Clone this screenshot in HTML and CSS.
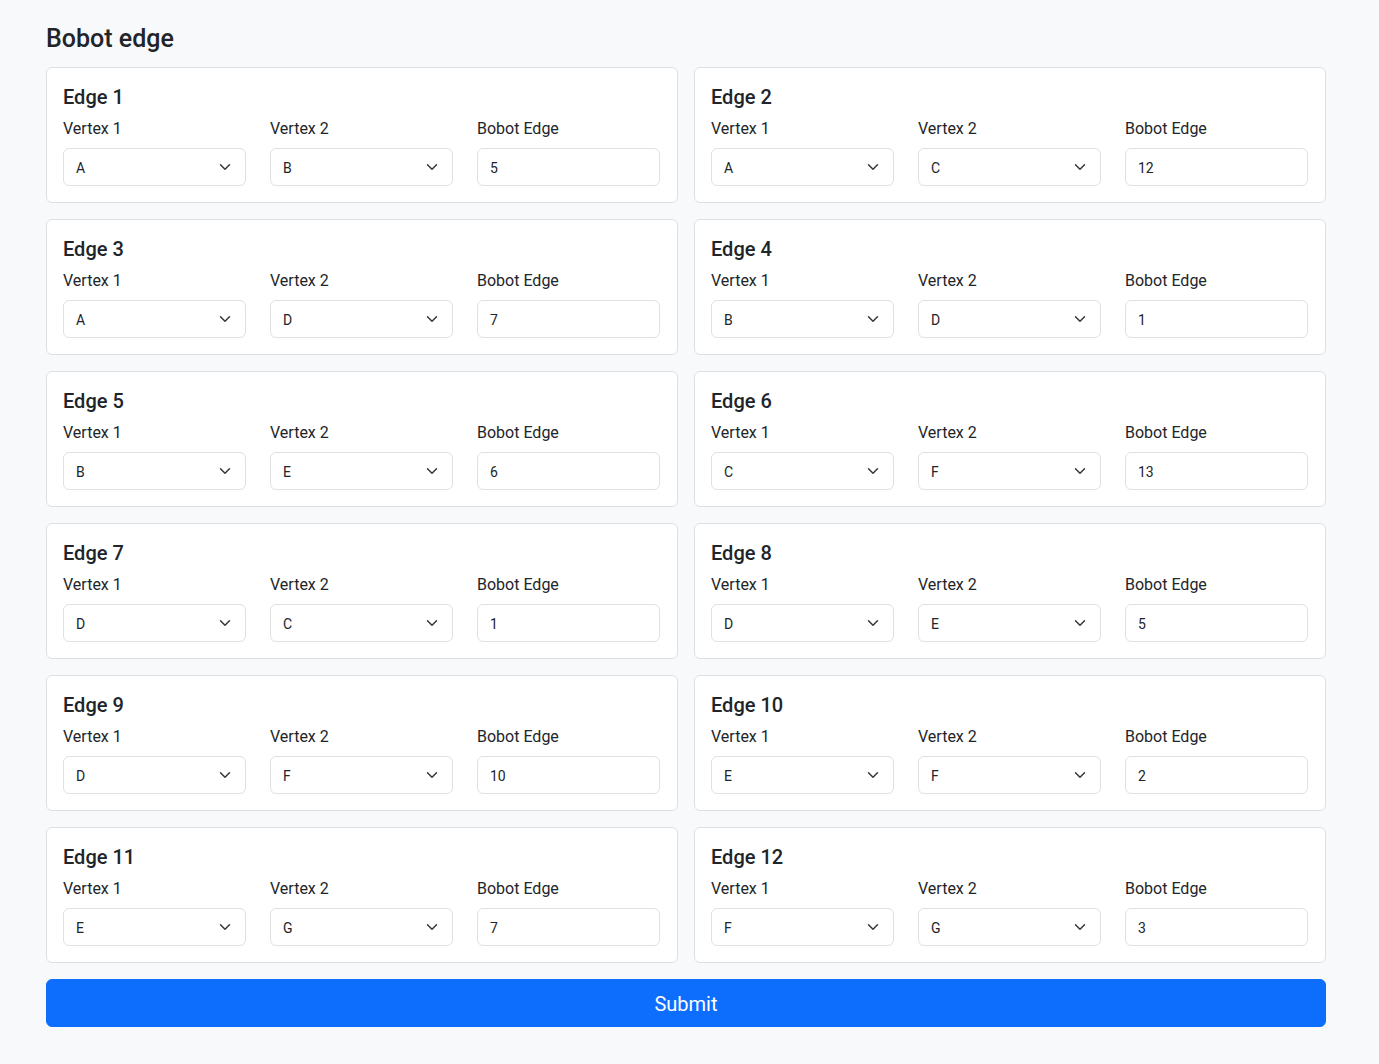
FILE: index.html
```html
<!DOCTYPE html>
<html lang="en">
<head>
<meta charset="utf-8">
<title>Bobot edge</title>
<link rel="stylesheet" href="styles.css">
</head>
<body>
<main class="page">
  <h4 class="title">Bobot edge</h4>
  <form class="edges">
    <div class="card"><h5 class="card-title">Edge 1</h5><div class="fields">
      <div class="field"><label class="label">Vertex 1</label><select class="select"><option>A</option></select></div>
      <div class="field"><label class="label">Vertex 2</label><select class="select"><option>B</option></select></div>
      <div class="field"><label class="label">Bobot Edge</label><input class="input" value="5"></div></div></div>
    <div class="card"><h5 class="card-title">Edge 2</h5><div class="fields">
      <div class="field"><label class="label">Vertex 1</label><select class="select"><option>A</option></select></div>
      <div class="field"><label class="label">Vertex 2</label><select class="select"><option>C</option></select></div>
      <div class="field"><label class="label">Bobot Edge</label><input class="input" value="12"></div></div></div>
    <div class="card"><h5 class="card-title">Edge 3</h5><div class="fields">
      <div class="field"><label class="label">Vertex 1</label><select class="select"><option>A</option></select></div>
      <div class="field"><label class="label">Vertex 2</label><select class="select"><option>D</option></select></div>
      <div class="field"><label class="label">Bobot Edge</label><input class="input" value="7"></div></div></div>
    <div class="card"><h5 class="card-title">Edge 4</h5><div class="fields">
      <div class="field"><label class="label">Vertex 1</label><select class="select"><option>B</option></select></div>
      <div class="field"><label class="label">Vertex 2</label><select class="select"><option>D</option></select></div>
      <div class="field"><label class="label">Bobot Edge</label><input class="input" value="1"></div></div></div>
    <div class="card"><h5 class="card-title">Edge 5</h5><div class="fields">
      <div class="field"><label class="label">Vertex 1</label><select class="select"><option>B</option></select></div>
      <div class="field"><label class="label">Vertex 2</label><select class="select"><option>E</option></select></div>
      <div class="field"><label class="label">Bobot Edge</label><input class="input" value="6"></div></div></div>
    <div class="card"><h5 class="card-title">Edge 6</h5><div class="fields">
      <div class="field"><label class="label">Vertex 1</label><select class="select"><option>C</option></select></div>
      <div class="field"><label class="label">Vertex 2</label><select class="select"><option>F</option></select></div>
      <div class="field"><label class="label">Bobot Edge</label><input class="input" value="13"></div></div></div>
    <div class="card"><h5 class="card-title">Edge 7</h5><div class="fields">
      <div class="field"><label class="label">Vertex 1</label><select class="select"><option>D</option></select></div>
      <div class="field"><label class="label">Vertex 2</label><select class="select"><option>C</option></select></div>
      <div class="field"><label class="label">Bobot Edge</label><input class="input" value="1"></div></div></div>
    <div class="card"><h5 class="card-title">Edge 8</h5><div class="fields">
      <div class="field"><label class="label">Vertex 1</label><select class="select"><option>D</option></select></div>
      <div class="field"><label class="label">Vertex 2</label><select class="select"><option>E</option></select></div>
      <div class="field"><label class="label">Bobot Edge</label><input class="input" value="5"></div></div></div>
    <div class="card"><h5 class="card-title">Edge 9</h5><div class="fields">
      <div class="field"><label class="label">Vertex 1</label><select class="select"><option>D</option></select></div>
      <div class="field"><label class="label">Vertex 2</label><select class="select"><option>F</option></select></div>
      <div class="field"><label class="label">Bobot Edge</label><input class="input" value="10"></div></div></div>
    <div class="card"><h5 class="card-title">Edge 10</h5><div class="fields">
      <div class="field"><label class="label">Vertex 1</label><select class="select"><option>E</option></select></div>
      <div class="field"><label class="label">Vertex 2</label><select class="select"><option>F</option></select></div>
      <div class="field"><label class="label">Bobot Edge</label><input class="input" value="2"></div></div></div>
    <div class="card"><h5 class="card-title">Edge 11</h5><div class="fields">
      <div class="field"><label class="label">Vertex 1</label><select class="select"><option>E</option></select></div>
      <div class="field"><label class="label">Vertex 2</label><select class="select"><option>G</option></select></div>
      <div class="field"><label class="label">Bobot Edge</label><input class="input" value="7"></div></div></div>
    <div class="card"><h5 class="card-title">Edge 12</h5><div class="fields">
      <div class="field"><label class="label">Vertex 1</label><select class="select"><option>F</option></select></div>
      <div class="field"><label class="label">Vertex 2</label><select class="select"><option>G</option></select></div>
      <div class="field"><label class="label">Bobot Edge</label><input class="input" value="3"></div></div></div>
    <button type="button" class="submit">Submit</button>
  </form>
</main>
</body>
</html>
```
FILE: styles.css
```css
* { box-sizing: border-box; }
html, body { margin: 0; padding: 0; }
body {
  background: #f8f9fa;
  color: #212529;
  font-family: Roboto, "Noto Sans", "Liberation Sans", sans-serif;
  font-size: 16px;
  line-height: 1.5;
}
.page {
  width: 1280px;
  margin-left: 46px;
  padding-top: 24px;
  padding-bottom: 37px;
}
.title {
  margin: 0 0 13px 0;
  font-size: 25px;
  font-weight: 500;
  line-height: 30px;
}
.edges {
  display: grid;
  grid-template-columns: 1fr 1fr;
  gap: 16px;
}
.card {
  background: #fff;
  border: 1px solid #dfe0e1;
  border-radius: 6px;
  padding: 16px;
}
.card-title {
  margin: 1px 0 8px 0;
  font-size: 20px;
  font-weight: 500;
  line-height: 24px;
}
.fields {
  display: grid;
  grid-template-columns: repeat(3, 183px);
  column-gap: 24px;
}
.field { display: flex; flex-direction: column; }
.label {
  display: block;
  margin-bottom: 7px;
  font-size: 16px;
  line-height: 24px;
}
.select, .input {
  display: block;
  width: 100%;
  height: 38px;
  padding: 7px 12px 5px 12px;
  font-family: inherit;
  font-size: 14px;
  line-height: 24px;
  color: #212529;
  background-color: #fff;
  border: 1px solid #dee2e6;
  border-radius: 6px;
  outline: none;
}
.select {
  appearance: none;
  -webkit-appearance: none;
  padding-right: 36px;
  background-image: url("data:image/svg+xml,%3csvg xmlns='http://www.w3.org/2000/svg' viewBox='0 0 16 16'%3e%3cpath fill='none' stroke='%23343a40' stroke-linecap='round' stroke-linejoin='round' stroke-width='2' d='m2 5 6 6 6-6'/%3e%3c/svg%3e");
  background-repeat: no-repeat;
  background-position: right 12px center;
  background-size: 16px 12px;
}
.submit {
  grid-column: 1 / -1;
  height: 48px;
  background: #0d6efd;
  color: #fff;
  border: 1px solid #0d6efd;
  border-radius: 6px;
  font-family: inherit;
  font-size: 20px;
  line-height: 30px;
  padding: 9px 16px 7px 16px;
}
```
